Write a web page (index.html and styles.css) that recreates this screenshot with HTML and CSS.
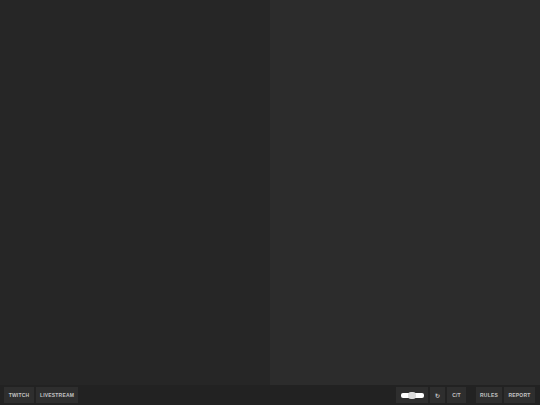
FILE: index.html
```html
<!DOCTYPE html>
<html>
<head>
<meta charset="utf-8">
<link rel="stylesheet" href="styles.css">
</head>
<body>
<div class="app">
  <main class="panels">
    <section class="panel panel-left"></section>
    <section class="panel panel-right"></section>
  </main>
  <footer class="bar">
    <div class="group">
      <button class="btn btn-twitch">TWITCH</button>
      <button class="btn btn-live">LIVESTREAM</button>
    </div>
    <div class="spacer"></div>
    <div class="group">
      <button class="btn btn-slider"><span class="track"><span class="knob"></span></span></button>
      <button class="btn btn-rotate">↻</button>
      <button class="btn btn-ct">C/T</button>
    </div>
    <div class="group group-last">
      <button class="btn btn-rules">RULES</button>
      <button class="btn btn-report">REPORT</button>
    </div>
  </footer>
</div>
</body>
</html>
```
FILE: styles.css
```css
html, body {
  margin: 0;
  padding: 0;
  width: 540px;
  height: 405px;
  overflow: hidden;
  background: #222222;
  font-family: "Liberation Sans", Arial, sans-serif;
}
.app {
  display: flex;
  flex-direction: column;
  width: 540px;
  height: 405px;
}
.panels {
  display: flex;
  height: 385px;
}
.panel-left {
  width: 270px;
  background: #262626;
}
.panel-right {
  flex: 1;
  background: #2c2c2c;
}
.bar {
  height: 20px;
  display: flex;
  align-items: center;
  padding: 0 5px 0 4px;
  background: #222222;
}
.group {
  display: flex;
  gap: 2px;
}
.group-last {
  margin-left: 10px;
}
.spacer {
  flex: 1;
}
.btn {
  height: 16px;
  border: none;
  margin: 0;
  padding: 0 6px;
  background: #2e2e2e;
  color: #c4c4c4;
  font-family: "Liberation Sans", Arial, sans-serif;
  font-weight: bold;
  font-size: 5px;
  letter-spacing: 0.2px;
  -webkit-font-smoothing: antialiased;
  display: flex;
  align-items: center;
  justify-content: center;
}
.btn-twitch { width: 30px; }
.btn-live { width: 42px; }
.btn-slider { width: 32px; padding: 0; }
.btn-rotate { width: 15px; padding: 0; font-size: 6px; }
.btn-ct { width: 19px; padding: 0; }
.btn-rules { width: 26px; padding: 0; }
.btn-report { width: 31px; padding: 0; }
.track {
  position: relative;
  display: block;
  width: 23px;
  height: 5px;
  border-radius: 2px;
  background: #ffffff;
}
.knob {
  position: absolute;
  left: 7px;
  top: -1px;
  width: 8px;
  height: 7px;
  border-radius: 3px;
  background: #dcdcdc;
}
```
